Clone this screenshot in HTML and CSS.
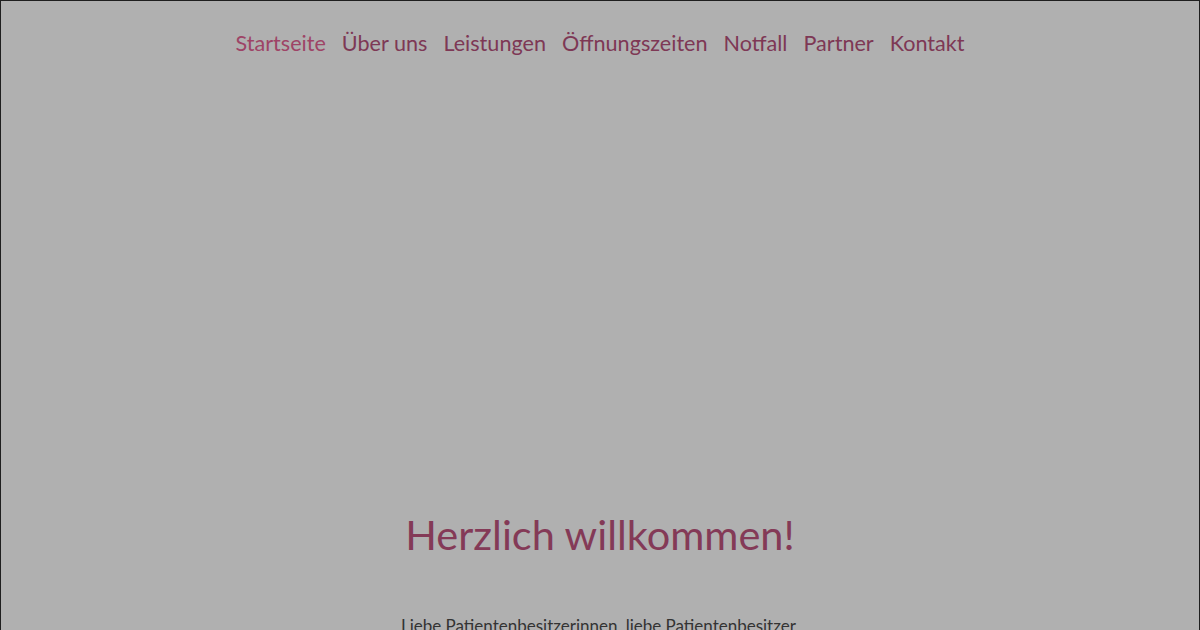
FILE: index.html
```html
<!DOCTYPE html>
<html lang="de">
<head>
<meta charset="utf-8">
<title>Startseite</title>
<link rel="stylesheet" href="styles.css">
</head>
<body>
<div class="page">
  <nav class="nav">
    <a class="nav-link active" href="#">Startseite</a>
    <a class="nav-link" href="#">Über uns</a>
    <a class="nav-link" href="#">Leistungen</a>
    <a class="nav-link" href="#">Öffnungszeiten</a>
    <a class="nav-link" href="#">Notfall</a>
    <a class="nav-link" href="#">Partner</a>
    <a class="nav-link" href="#">Kontakt</a>
  </nav>
  <div class="hero"></div>
  <main class="content">
    <h1 class="title">Herzlich willkommen!</h1>
    <p class="text">Liebe Patientenbesitzerinnen, liebe Patientenbesitzer,</p>
  </main>
</div>
</body>
</html>
```
FILE: styles.css
```css
html, body {
  margin: 0;
  padding: 0;
  height: 100%;
  overflow: hidden;
  background: #b0b0b0;
}
.page {
  box-sizing: border-box;
  height: 630px;
  border: 1px solid #1e1e1e;
  border-bottom: none;
  background: #b0b0b0;
  font-family: "Lato", "Open Sans", sans-serif;
  overflow: hidden;
}
.nav {
  display: flex;
  justify-content: center;
  gap: 16px;
  padding-top: 28px;
}
.nav-link {
  font-size: 21.6px;
  color: #7e3855;
  text-decoration: none;
  line-height: 28px;
}
.nav-link.active {
  color: #9e4466;
}
.hero {
  height: 452px;
}
.content {
  text-align: center;
}
.title {
  margin: 0;
  font-size: 41.5px;
  font-weight: 400;
  color: #843a57;
  line-height: 50px;
}
.text {
  margin: 56px 0 0;
  font-size: 17px;
  color: #333;
}
```
